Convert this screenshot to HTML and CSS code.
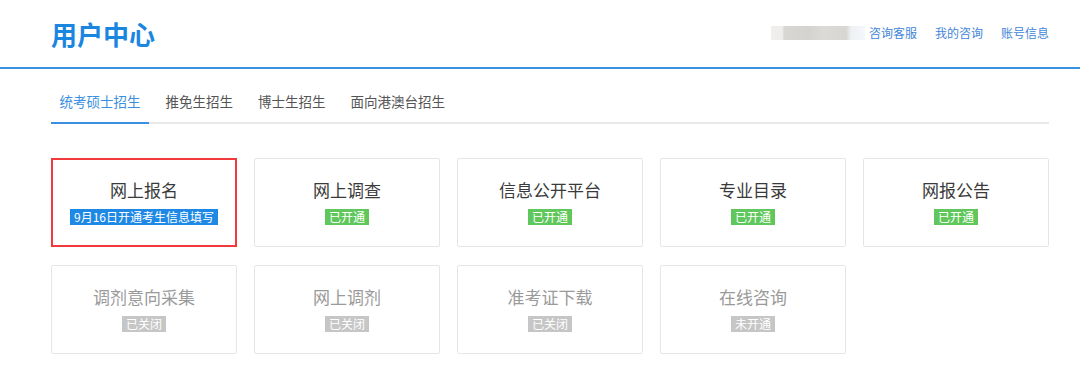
FILE: index.html
```html
<!DOCTYPE html>
<html lang="zh-CN">
<head>
<meta charset="utf-8">
<title>用户中心</title>
<link rel="stylesheet" href="styles.css">
</head>
<body>
<header class="topbar">
  <h1 class="brand">用户中心</h1>
  <nav class="toplinks">
    <span class="user-blur" aria-hidden="true"></span>
    <a href="#">咨询客服</a>
    <a href="#">我的咨询</a>
    <a href="#">账号信息</a>
  </nav>
</header>
<main class="main">
  <ul class="tabs">
    <li class="tab active">统考硕士招生</li>
    <li class="tab">推免生招生</li>
    <li class="tab">博士生招生</li>
    <li class="tab">面向港澳台招生</li>
  </ul>
  <div class="grid">
    <div class="card highlight"><div class="card-title">网上报名</div><span class="badge blue">9月16日开通考生信息填写</span></div>
    <div class="card"><div class="card-title">网上调查</div><span class="badge green">已开通</span></div>
    <div class="card"><div class="card-title">信息公开平台</div><span class="badge green">已开通</span></div>
    <div class="card"><div class="card-title">专业目录</div><span class="badge green">已开通</span></div>
    <div class="card"><div class="card-title">网报公告</div><span class="badge green">已开通</span></div>
    <div class="card off"><div class="card-title">调剂意向采集</div><span class="badge gray">已关闭</span></div>
    <div class="card off"><div class="card-title">网上调剂</div><span class="badge gray">已关闭</span></div>
    <div class="card off"><div class="card-title">准考证下载</div><span class="badge gray">已关闭</span></div>
    <div class="card off"><div class="card-title">在线咨询</div><span class="badge gray">未开通</span></div>
  </div>
</main>
</body>
</html>
```
FILE: styles.css
```css
* { box-sizing: border-box; }
html, body { margin: 0; padding: 0; background: #fff; }
body {
  font-family: "Noto Sans CJK SC", "Microsoft YaHei", "Noto Sans", sans-serif;
  color: #333;
}
.topbar {
  height: 69px;
  border-bottom: 2px solid #3a92e2;
  display: flex;
  align-items: center;
  justify-content: space-between;
  padding: 0 31px 0 51px;
}
.brand {
  margin: 0;
  font-size: 26px;
  line-height: 1;
  font-weight: 700;
  color: #1a86e0;
  letter-spacing: 0;
}
.toplinks {
  display: flex;
  align-items: center;
  gap: 18px;
  font-size: 12px;
  line-height: 16px;
  margin-top: -2px;
}
.toplinks a {
  color: #3f86d8;
  text-decoration: none;
}
.user-blur {
  display: block;
  width: 94px;
  height: 14px;
  margin-right: -14px;
  background: linear-gradient(90deg, #f0efee 0%, #eeedec 12%, #d9d7d3 14%, #d5d3cf 40%, #dcdad7 55%, #d8d6d2 80%, #eef0f4 85%, #f4f7fb 100%);
  filter: blur(0.6px);
}
.main {
  padding: 0 31px 0 51px;
}
.tabs {
  list-style: none;
  margin: 22px 0 0;
  padding: 0;
  display: flex;
  border-bottom: 2px solid #e8e8e8;
}
.tab {
  font-size: 13.5px;
  line-height: 20px;
  padding: 0 8.5px 11px;
  margin-right: 8px;
  margin-bottom: -2px;
  border-bottom: 2px solid transparent;
  color: #555;
}
.tab.active {
  color: #3b8fe0;
  border-bottom-color: #3b8fe0;
}
.grid {
  margin-top: 34px;
  display: grid;
  grid-template-columns: repeat(5, 186px);
  grid-auto-rows: 89px;
  column-gap: 17px;
  row-gap: 18px;
}
.card {
  border: 1px solid #e6e6e6;
  border-radius: 2px;
  display: flex;
  flex-direction: column;
  align-items: center;
  padding-top: 19px;
}
.card.highlight {
  border: 2px solid #f2393c;
  border-radius: 0;
  padding-top: 18px;
}
.card-title {
  font-size: 17px;
  line-height: 24px;
  color: #3a3a3a;
  margin-bottom: 7px;
}
.card.off .card-title { color: #9a9a9a; }
.badge {
  display: inline-block;
  font-size: 12px;
  line-height: 16px;
  padding: 0 4px;
  color: #fff;
}
.badge.blue { background: #1e88e5; }
.badge.green { background: #5fc75b; }
.badge.gray { background: #c6c6c6; }
```
